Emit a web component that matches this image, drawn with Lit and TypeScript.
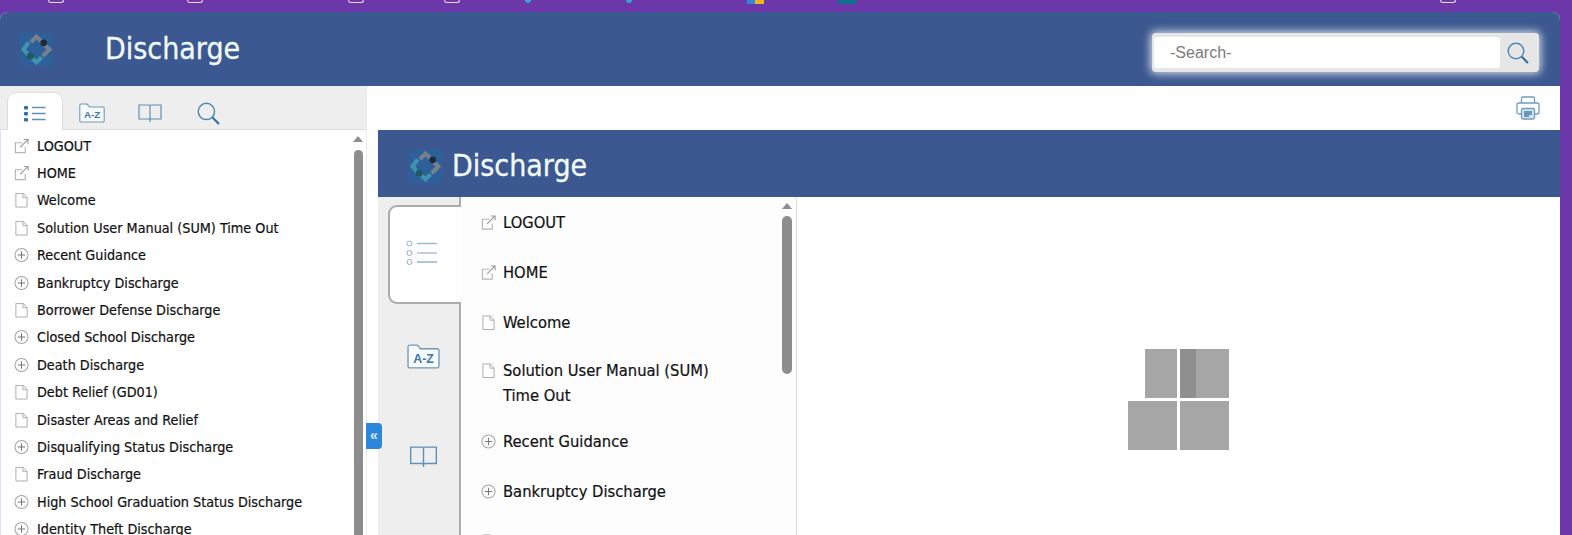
import { LitElement, html, css, svg } from "lit";
import { customElement } from "lit/decorators.js";

type Kind = "ext" | "doc" | "plus";
const outer: [Kind, string][] = [
  ["ext", "LOGOUT"], ["ext", "HOME"], ["doc", "Welcome"], ["doc", "Solution User Manual (SUM) Time Out"],
  ["plus", "Recent Guidance"], ["plus", "Bankruptcy Discharge"], ["doc", "Borrower Defense Discharge"],
  ["plus", "Closed School Discharge"], ["plus", "Death Discharge"], ["doc", "Debt Relief (GD01)"],
  ["doc", "Disaster Areas and Relief"], ["plus", "Disqualifying Status Discharge"], ["doc", "Fraud Discharge"],
  ["plus", "High School Graduation Status Discharge"], ["plus", "Identity Theft Discharge"],
];
const inner: [Kind, string, boolean][] = [
  ["ext", "LOGOUT", false], ["ext", "HOME", false], ["doc", "Welcome", false],
  ["doc", "Solution User Manual (SUM) Time Out", true], ["plus", "Recent Guidance", false],
  ["plus", "Bankruptcy Discharge", false], ["doc", "Borrower Defense Discharge", false],
];

const kindIcon = (k: Kind) => {
  if (k === "ext") return svg`<svg class="ti" viewBox="0 0 16 16" fill="none" stroke="#b5b5b5" stroke-width="1.200"><path d="M9 4.500H1.500v10.500h10.500V9"/><path d="M6.500 9.500 14.500 1.500M10.500 1h4.500v4.500" stroke="#999"/></svg>`;
  if (k === "doc") return svg`<svg class="ti" viewBox="0 0 16 16" fill="none" stroke="#aaa" stroke-width="1"><path d="M2 1h8l4 4.500v10H2zM9.500 1v4.500H14"/></svg>`;
  return svg`<svg class="ti" viewBox="0 0 16 16" fill="none" stroke="#a5a5a5" stroke-width="1.100"><circle cx="8" cy="8" r="7"/><path d="M4 8h8M8 4v8" stroke="#777"/></svg>`;
};
const logo = svg`<svg class="logo" viewBox="0 0 32 32"><rect width="32" height="32" fill="#2d5f98"/><path d="M10.500 9 16 3.500 28.500 16 22 22.500" fill="none" stroke="#76808f" stroke-width="4"/><path d="M8.500 9 3.500 16 9 22.500M10.500 23.500 16 28.500 21 23.500" fill="none" stroke="#3f93ad" stroke-width="4"/><circle cx="23" cy="9.500" r="3.300" fill="#1c2b3a"/><circle cx="10" cy="22.500" r="3.300" fill="#1f5a63"/></svg>`;
const listIcon = svg`<svg class="tab-ic" width="22" height="18" viewBox="0 0 22 18"><g fill="#2f6fa8"><rect x="0" y="1" width="4" height="3.500" rx="1"/><rect x="0" y="7" width="4" height="3.500" rx="1"/><rect x="0" y="13" width="4" height="3.500" rx="1"/></g><g stroke="#5b8fb4" stroke-width="1.500"><path d="M8 2.500h13.500M8 8.500h13.500M8 14.500h13.500"/></g></svg>`;
const azIcon = (w: number) => svg`<svg width="${w}" height="${Math.round(w * 0.75)}" viewBox="0 0 32 24" fill="none"><path d="M1 21.500V2.500A1.500 1.500 0 0 1 2.500 1H10l3 3.500h16.500A1.500 1.500 0 0 1 31 6v15.500a1.500 1.500 0 0 1-1.500 1.500h-27A1.500 1.500 0 0 1 1 21.500z" fill="#f7fafc" stroke="#6e97b8" stroke-width="1.300"/><text x="16" y="18.500" text-anchor="middle" font-family="Liberation Sans, sans-serif" font-size="12" font-weight="700" fill="#3f77a5">A-Z</text></svg>`;
const bookIcon = (w: number, h: number) => svg`<svg width="${w}" height="${h}" viewBox="0 0 24 18" fill="none" stroke="#5f91b8" stroke-width="1.200"><path d="M1 1h10a1 1 0 0 1 1 1v14a1 1 0 0 0-1-1H1zM23 1H13a1 1 0 0 0-1 1v14a1 1 0 0 1 1-1h10zM12 15v3"/></svg>`;
const searchIcon = (s: number) => svg`<svg width="${s}" height="${s}" viewBox="0 0 22 22" fill="none"><circle cx="9" cy="9" r="7.800" stroke="#4c88b5" stroke-width="1.400"/><path d="M14.800 14.800 21 21" stroke="#2d6f9f" stroke-width="2"/></svg>`;
const printer = svg`<svg width="24" height="24" viewBox="0 0 24 24" fill="none" stroke="#6f9cc0" stroke-width="1.300"><path d="M5.500 7V2.500a1.500 1.500 0 0 1 1.500-1.500h10a1.500 1.500 0 0 1 1.500 1.500V7"/><path d="M5 18H3a2 2 0 0 1-2-2V9a2 2 0 0 1 2-2h18a2 2 0 0 1 2 2v7a2 2 0 0 1-2 2h-2"/><rect x="5.500" y="12.500" width="13" height="10.500" rx="1.500" fill="#d6e4ef"/><path d="M8 16h8M8 18h8M8 20h5" stroke="#4c7ea5"/></svg>`;
const outlineList = svg`<svg width="31" height="27" viewBox="0 0 31 27" fill="none"><g stroke="#92aebf" stroke-width="1"><circle cx="3.500" cy="3.500" r="2.500"/><circle cx="3.500" cy="13" r="2.500"/><circle cx="3.500" cy="22" r="2.500"/></g><path d="M11 3.500h20" stroke="#9dbccb" stroke-width="1.500"/><path d="M11 13h20" stroke="#7ea4b8" stroke-width="1"/><path d="M11 22h20" stroke="#5e8eaa" stroke-width="1"/></svg>`;

@customElement("app-root")
export class AppRoot extends LitElement {
  static styles = css`
    :host { display: flex; flex-direction: column; height: 535px; width: 1572px; overflow: hidden; background: #6c37a9;
      font-family: "DejaVu Sans Condensed", "DejaVu Sans", sans-serif; font-stretch: condensed; color: #111; }
    .bookmarks { height: 12px; flex: none; display: flex; align-items: flex-start; overflow: hidden; }
    .mark { flex: none; width: 16px; height: 4px; box-sizing: border-box; margin-top: -1px; }
    .mark.o { border: 1px solid #e6dcf3; border-top: 0; border-radius: 0 0 3px 3px; }
    .mark.c { width: 6px; background: #35a8c8; border-radius: 0 0 3px 3px; }
    .mark.m { background: linear-gradient(90deg, #2f87d8 50%, #f4b41f 50%); width: 17px; height: 5px; }
    .mark.t { background: #0f6f8f; width: 18px; height: 5px; }
    .app { flex: 1; min-height: 0; margin-right: 12px; display: flex; flex-direction: column; background: #fff; border-radius: 8px 8px 0 0; overflow: hidden; }
    header { height: 74px; flex: none; background: #3b5890; display: flex; align-items: center; padding: 0 21px 0 20px; box-sizing: border-box; }
    .logo { width: 33px; height: 33px; flex: none; display: block; }
    .title { color: #f2fafc; font-size: 30px; line-height: 1; -webkit-text-stroke: 0.3px #f2fafc; }
    header .title { margin-left: 52px; }
    .search { margin-left: auto; width: 387px; height: 39px; margin-top: 7px; box-sizing: border-box; background: #e6e6e6; border-radius: 4px; padding: 4px 0 4px 2px; display: flex; box-shadow: 0 0 8px 2px rgba(255,255,255,.75); }
    .field { width: 346px; background: #fff; border-radius: 3px; padding-left: 16px; box-sizing: border-box; font: 16px/31px "Liberation Sans", sans-serif; color: #7b7b7b; }
    .go { flex: 1; display: flex; align-items: center; justify-content: center; }
    .go svg { margin-right: 3px; }
    .body { flex: 1; min-height: 0; display: flex; position: relative; }
    .side { width: 366px; flex: none; display: flex; flex-direction: column; border-right: 1px solid #ececec; }
    .tabs { height: 44px; flex: none; box-sizing: border-box; background: #eee; border-bottom: 1px solid #ddd; display: flex; align-items: flex-end; padding-left: 7px; }
    .tab { width: 56px; height: 38px; display: flex; align-items: center; justify-content: center; margin-bottom: -1px; box-sizing: border-box; padding-top: 4px; }
    .tab.on { background: #fff; border: 1px solid #ddd; border-bottom: 0; border-radius: 9px 9px 0 0; }
    .tab + .tab { width: 58px; }
    .scrollwrap { flex: 1; min-height: 0; display: flex; overflow: hidden; background: #fff; border-left: 1px solid #e6defa; }
    .tree { flex: 1; min-width: 0; padding: 2px 0 0 13px; }
    .row { height: 27.400px; display: flex; align-items: center; gap: 8px; font-size: 14.250px; white-space: nowrap; -webkit-text-stroke: 0.2px #111; }
    .ti { width: 15px; height: 16px; flex: none; display: block; }
    .bar { width: 14px; flex: none; display: flex; flex-direction: column; align-items: center; margin-right: 1px; padding-top: 6px; gap: 8px; }
    .arrow { width: 0; height: 0; border: 5.500px solid transparent; border-top: 0; border-bottom: 6px solid #8e8e8e; flex: none; }
    .thumb { width: 9px; flex: 1; background: #8d8d8d; border-radius: 5px 5px 0 0; }
    .collapse { position: absolute; left: 366px; top: 337px; width: 16px; height: 26px; background: #2d86dc; border-radius: 0 4px 4px 0; color: #dbeaf8; font: bold 14px/24px "Liberation Sans", sans-serif; text-align: center; }
    .content { flex: 1; min-width: 0; display: flex; flex-direction: column; }
    .tools { height: 44px; flex: none; display: flex; align-items: center; justify-content: flex-end; padding-right: 20px; box-sizing: border-box; }
    .frame { flex: 1; min-height: 0; margin-left: 11px; display: flex; flex-direction: column; }
    .fhead { height: 67px; flex: none; background: #3b5890; display: flex; align-items: center; gap: 10px; padding-left: 31px; box-sizing: border-box; }
    .fhead .logo { margin-top: 5px; }
    .fhead .title { margin-top: 4px; }
    .fbody { flex: 1; min-height: 0; display: flex; overflow: hidden; }
    .vtabs { width: 83px; flex: none; background: #eee; box-sizing: border-box; border-right: 2px solid #acacac; padding: 8px 0 0 10px; display: flex; flex-direction: column; }
    .vtab { height: 100px; flex: none; display: flex; align-items: center; justify-content: center; margin-right: -2px; box-sizing: border-box; padding-right: 2px; padding-top: 4px; }
    .vtab.on { height: 99px; background: #fff; border: 2px solid #acacac; border-right: 0; border-radius: 9px 0 0 9px; position: relative; padding-right: 8px; padding-top: 0; padding-bottom: 3px; }
    .vtree { width: 336px; flex: none; background: #fdfdfd; border-right: 1px solid #dcdcdc; display: flex; box-sizing: border-box; }
    .vlist { flex: 1; min-width: 0; padding: 0.500px 0 0 20px; }
    .vrow { display: flex; gap: 7px; font-size: 16.400px; line-height: 25px; padding: 12.500px 0; -webkit-text-stroke: 0.2px #111; }
    .vrow.multi { padding: 10px 0 9px; }
    .vrow .ti { height: 17px; margin-top: 4px; }
    .vrow span { width: 230px; }
    .vbar { width: 14px; flex: none; display: flex; flex-direction: column; align-items: center; margin-right: 2px; padding-top: 6px; gap: 7px; height: 171px; }
    .vbar .thumb { width: 10px; border-radius: 5px; }
    main { flex: 1; min-width: 0; display: flex; justify-content: center; align-items: flex-start; padding-top: 152px; }
    .loader { display: grid; grid-template-columns: 49px 49px; grid-template-rows: 49px 49px; gap: 3px; }
    .tile { background: #a6a6a6; }
    .tile.first { width: 32px; justify-self: end; }
    .tile.strip { background: linear-gradient(90deg, #8f8f8f 16px, #a6a6a6 16px); }
  `;

  render() {
    let cursor = 0;
    return html`
      <div class="bookmarks">
        ${[[48, "o"], [187, "o"], [348, "o"], [444, "o"], [525, "c"], [626, "c"], [747, "m"], [838, "t"], [1440, "o"]].map(([x, k]) => {
          const gap = (x as number) - cursor;
          const w = k === "c" ? 6 : k === "m" ? 17 : k === "t" ? 18 : 16;
          cursor = (x as number) + w;
          return html`<i class="mark ${k}" style="margin-left:${gap}px"></i>`;
        })}
      </div>
      <div class="app">
        <header>
          ${logo}<div class="title">Discharge</div>
          <div class="search"><div class="field">-Search-</div><div class="go">${searchIcon(22)}</div></div>
        </header>
        <div class="body">
          <div class="side">
            <div class="tabs">
              <div class="tab on">${listIcon}</div>
              <div class="tab">${azIcon(26)}</div>
              <div class="tab">${bookIcon(24, 18)}</div>
              <div class="tab">${searchIcon(23)}</div>
            </div>
            <div class="scrollwrap">
              <div class="tree">
                ${outer.map(([k, t]) => html`<div class="row">${kindIcon(k)}<span>${t}</span></div>`)}
              </div>
              <div class="bar"><i class="arrow"></i><i class="thumb"></i></div>
            </div>
          </div>
          <div class="collapse">«</div>
          <div class="content">
            <div class="tools">${printer}</div>
            <div class="frame">
              <div class="fhead">${logo}<div class="title">Discharge</div></div>
              <div class="fbody">
                <div class="vtabs">
                  <div class="vtab on">${outlineList}</div>
                  <div class="vtab az">${azIcon(33)}</div>
                  <div class="vtab">${bookIcon(29, 21)}</div>
                </div>
                <div class="vtree">
                  <div class="vlist">
                    ${inner.map(([k, t, m]) => html`<div class="vrow ${m ? "multi" : ""}">${kindIcon(k)}<span>${t}</span></div>`)}
                  </div>
                  <div class="vbar"><i class="arrow"></i><i class="thumb"></i></div>
                </div>
                <main>
                  <div class="loader">
                    <div class="tile first"></div><div class="tile strip"></div>
                    <div class="tile"></div><div class="tile"></div>
                  </div>
                </main>
              </div>
            </div>
          </div>
        </div>
      </div>
    `;
  }
}
